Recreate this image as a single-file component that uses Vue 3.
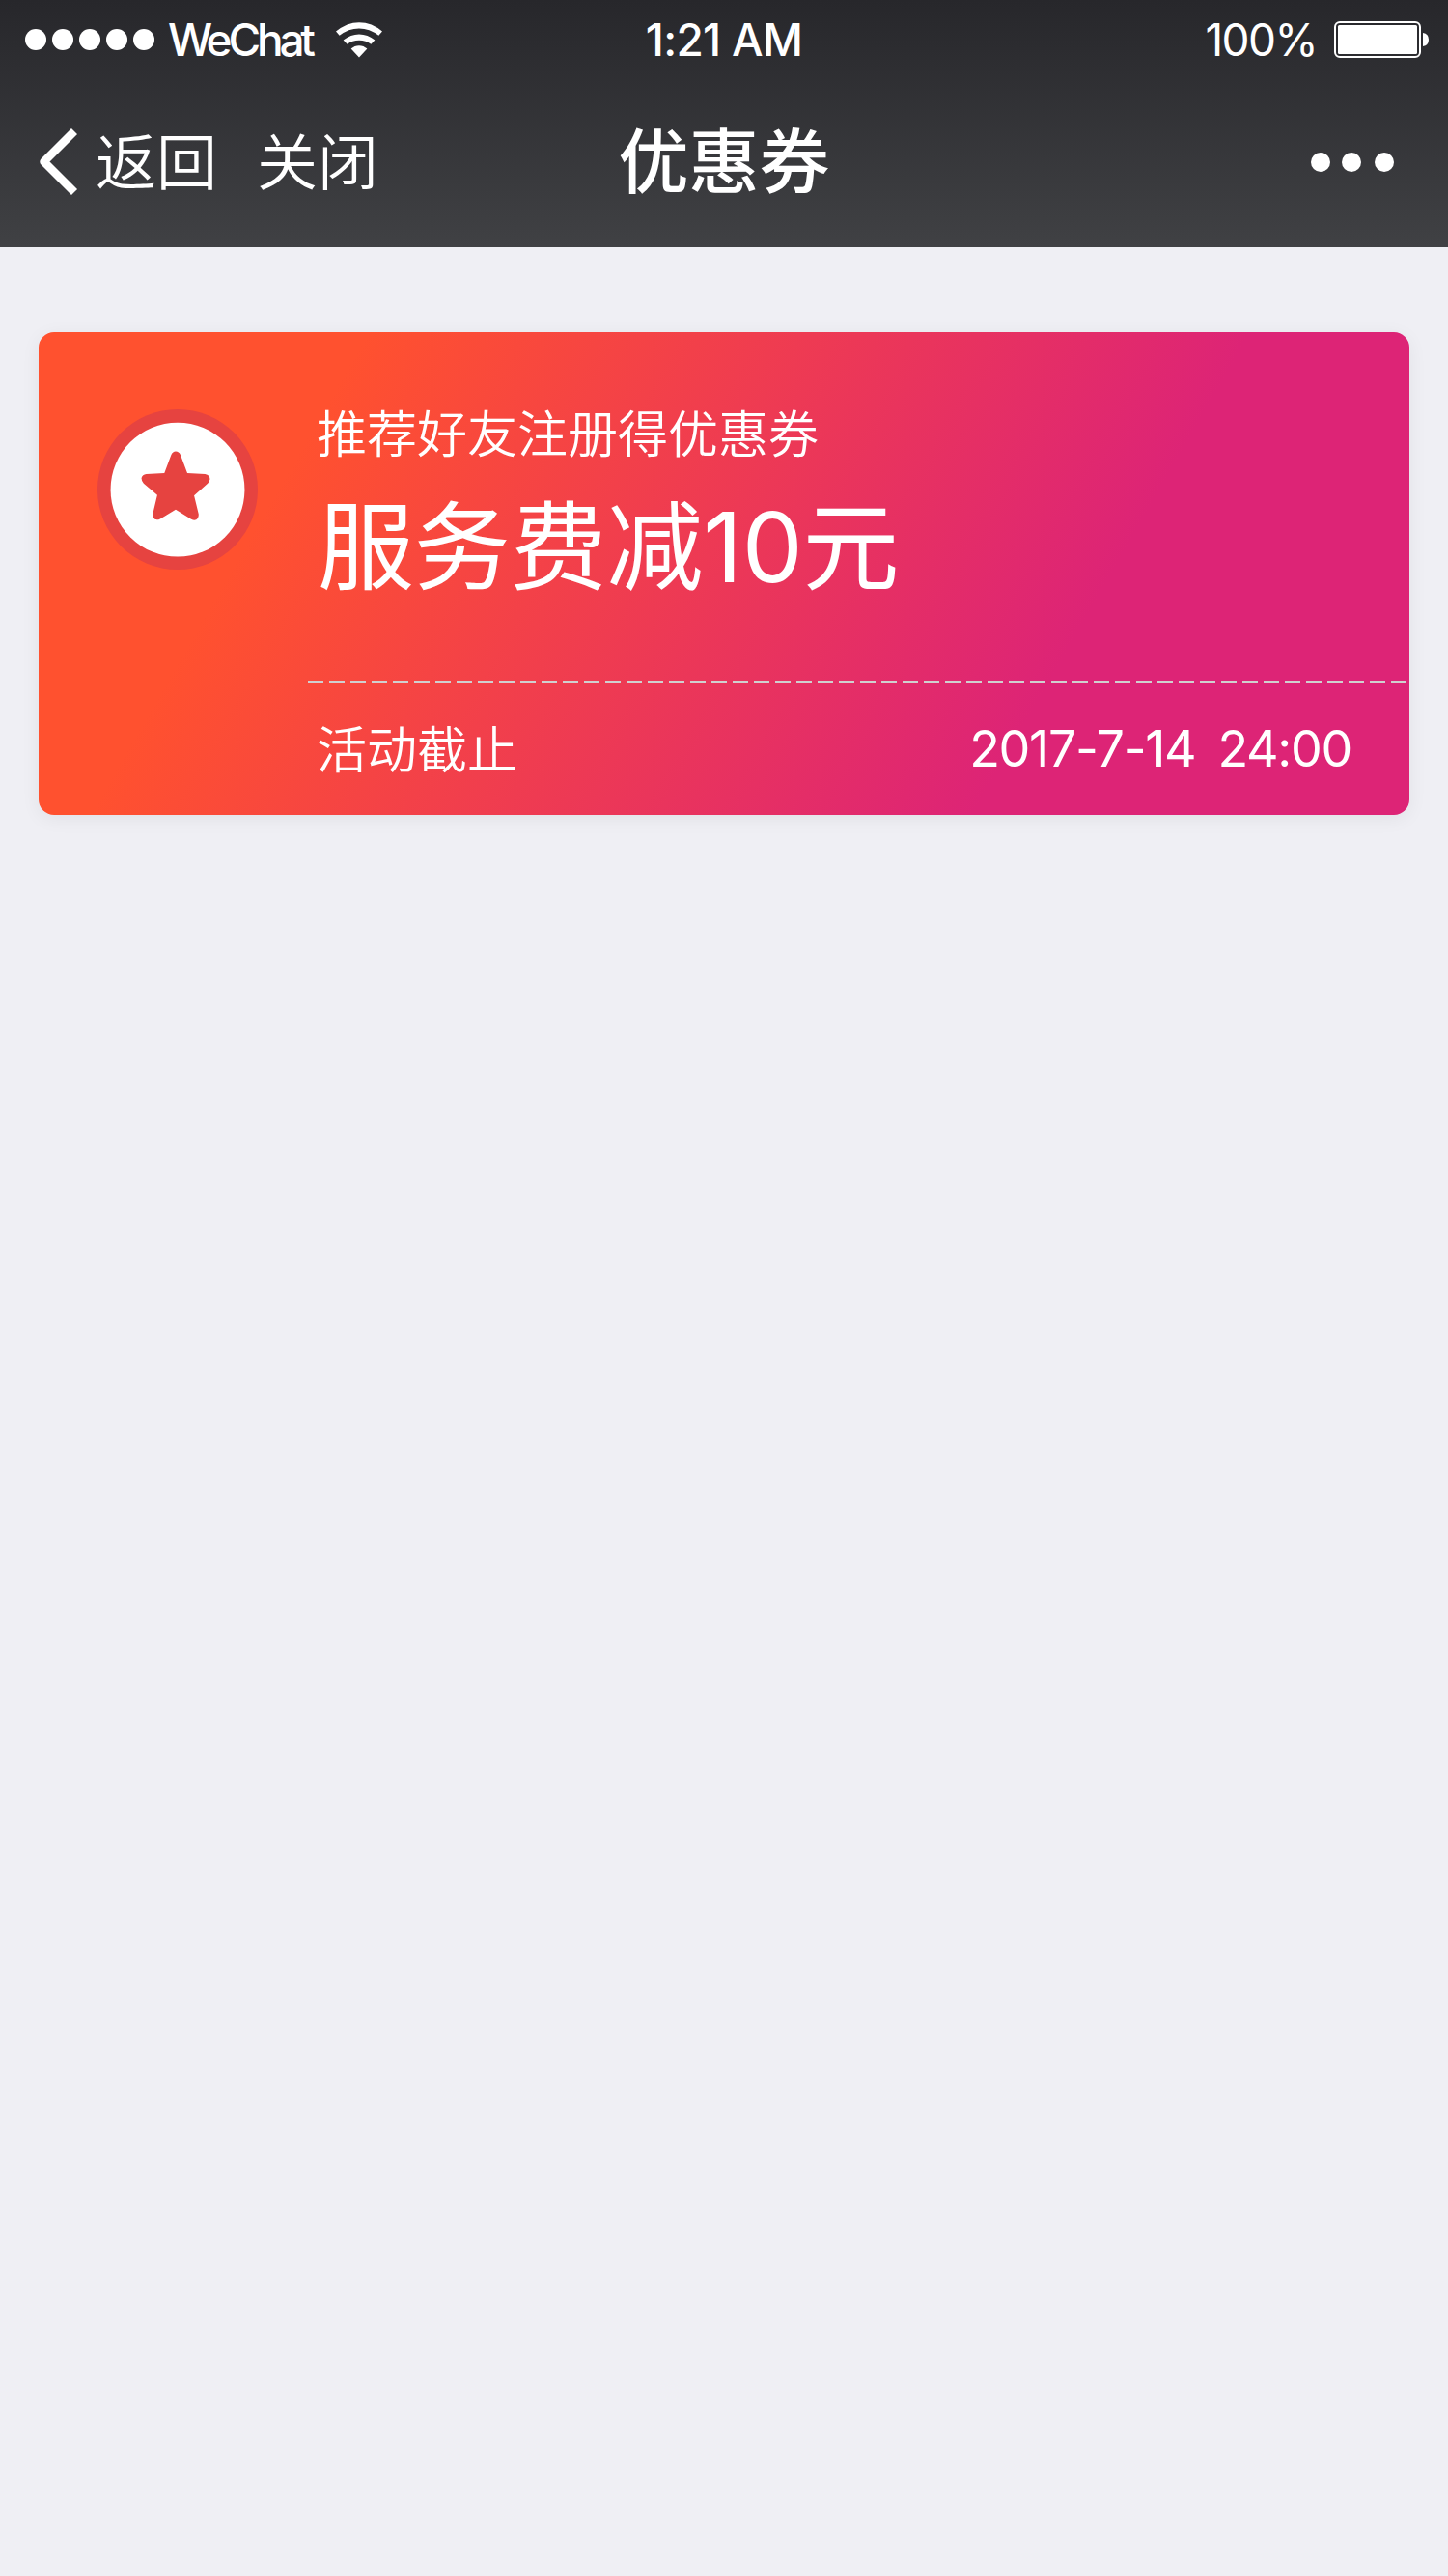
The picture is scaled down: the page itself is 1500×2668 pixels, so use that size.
<script setup>
const carrier = 'WeChat'
const coupons = [
  { id: 1, reason: '推荐好友注册得优惠券', title: '服务费减10元', label: '活动截止', date: '2017-7-14', time: '24:00' },
]
</script>

<template>
  <div class="page">
    <header class="header">
      <div class="status">
        <div class="status-left">
          <span class="signal"><i v-for="n in 5" :key="n"></i></span>
          <span class="carrier">{{ carrier }}</span>
          <svg class="wifi" viewBox="1044 71 144 110" fill="#fff">
            <path d="M1044 99 Q1078 71 1116 71 Q1156 71 1188 99 L1177 112 Q1148 90 1116 90 Q1083 90 1055 112 Z" />
            <path d="M1067 126 Q1090 108 1116 108 Q1143 108 1165 126 L1153 139 Q1137 127 1116 127 Q1095 127 1079 139 Z" />
            <path d="M1091 153 Q1102 143 1116 143 Q1130 143 1141 153 L1116 180 Z" />
          </svg>
        </div>
        <span class="clock">1:21 AM</span>
        <div class="status-right">
          <span class="percent">100%</span>
          <svg class="battery" viewBox="0 0 98 38">
            <rect x="1" y="1" width="88" height="36" rx="5" fill="none" stroke="#fff" stroke-width="2" />
            <rect x="4" y="4" width="82" height="30" rx="1.5" fill="#fff" />
            <path d="M92 12 Q98 13 98 19 Q98 25 92 26 Z" fill="#fff" />
          </svg>
        </div>
      </div>
      <nav class="nav">
        <div class="nav-left">
          <svg class="back" viewBox="0 0 42 72">
            <path d="M37 4 L5.500 35.500 L37 67" fill="none" stroke="#fff" stroke-width="8.500" stroke-linejoin="round" />
          </svg>
          <span class="nav-text">返回</span>
          <span class="nav-text close">关闭</span>
        </div>
        <h1 class="title">优惠券</h1>
        <div class="more"><i></i><i></i><i></i></div>
      </nav>
    </header>

    <main class="content">
      <article v-for="c in coupons" :key="c.id" class="coupon">
        <svg class="badge" viewBox="245 312 496 496">
          <circle cx="493" cy="560" r="248" fill="#e64340" />
          <circle cx="493" cy="560.5" r="207.5" fill="#fff" />
          <path fill="#e64340" d="M473 453 Q478 442 487 442 Q497 442 502 453 L523 509 L578 512 Q593 515 593 528 Q592 535 586 541 L544 579 L558 636 Q559 652 545 655 Q541 655 535 652 L487 622 L439 651 Q425 658 417 647 Q415 642 416 636 L430 577 L388 541 Q381 533 381 525 Q384 513 396 512 L452 509 Z" />
        </svg>
        <div class="body">
          <p class="reason">{{ c.reason }}</p>
          <h2 class="amount">{{ c.title }}</h2>
          <div class="divider"></div>
          <div class="deadline">
            <span class="label">{{ c.label }}</span>
            <span class="when"><span>{{ c.date }}</span><span>{{ c.time }}</span></span>
          </div>
        </div>
      </article>
    </main>
  </div>
</template>

<style>
body {
  background: #efeff4;
}
</style>

<style scoped>
.page {
  width: 1500px;
  min-height: 2668px;
  background: #efeff4;
  color: #fff;
  font-family: Inter, "Noto Sans CJK SC", sans-serif;
}
.header {
  height: 256px;
  background: linear-gradient(180deg, #27272b 0%, #404144 100%);
}
.status,
.nav {
  display: grid;
  grid-template-columns: 1fr auto 1fr;
  align-items: center;
}
.status {
  height: 82px;
  padding: 0 20px 0 26px;
  font-size: 46px;
  line-height: 56px;
}
.status-left,
.status-right,
.signal,
.nav-left,
.more {
  display: flex;
  align-items: center;
}
.signal {
  gap: 6px;
}
.signal i {
  width: 22px;
  height: 22px;
  border-radius: 50%;
  background: #fff;
}
.carrier {
  margin-left: 14px;
  width: 174px;
  font-weight: 500;
  letter-spacing: -4.2px;
}
.wifi {
  width: 48px;
  height: 37px;
}
.clock {
  margin-right: 6px;
  font-weight: 500;
  letter-spacing: -0.7px;
}
.status-right {
  justify-content: flex-end;
}
.percent {
  font-weight: 400;
  letter-spacing: -1.6px;
  margin-right: 18px;
}
.battery {
  width: 98px;
  height: 38px;
}
.nav {
  height: 172px;
  padding: 0 40px;
}
.back {
  width: 42px;
  height: 72px;
}
.nav-text {
  margin-left: 17px;
  font-size: 63px;
  line-height: 92px;
  font-weight: 350;
}
.close {
  margin-left: 41px;
}
.title {
  margin: 0;
  font-size: 73px;
  line-height: 100px;
  font-weight: 500;
}
.more {
  justify-content: flex-end;
  padding-right: 16px;
}
.more i {
  width: 20px;
  height: 20px;
  margin-left: 12px;
  border-radius: 50%;
  background: #fff;
}
.more i:last-child {
  margin-left: 14px;
}
.content {
  padding: 88px 40px;
}
.coupon {
  display: flex;
  height: 500px;
  border-radius: 16px;
  background: linear-gradient(120deg, #ff512f 20%, #dd2476 73.5%);
  box-shadow: 0 4px 20px rgba(0, 0, 0, 0.06);
}
.badge {
  flex: none;
  width: 166px;
  height: 166px;
  margin: 80px 0 0 61px;
}
.body {
  flex: 1;
  margin-left: 52px;
  padding-top: 69px;
}
.reason {
  margin: 0 0 0 9px;
  font-size: 52px;
  line-height: 76px;
  font-weight: 350;
}
.amount {
  margin: 5px 0 0 10px;
  font-size: 100px;
  line-height: 146px;
  font-weight: 375;
  letter-spacing: -0.2px;
}
.divider {
  height: 2px;
  margin-top: 65px;
  background: repeating-linear-gradient(90deg, #d0d0d0 0 16px, transparent 16px 22px);
}
.deadline {
  display: flex;
  justify-content: space-between;
  align-items: center;
  height: 137px;
  padding: 0 60px 0 9px;
  font-size: 52px;
  font-weight: 350;
}
.label {
  margin-top: -5px;
}
.when {
  display: flex;
  gap: 23px;
  font-weight: 400;
  letter-spacing: -1.3px;
}
</style>
